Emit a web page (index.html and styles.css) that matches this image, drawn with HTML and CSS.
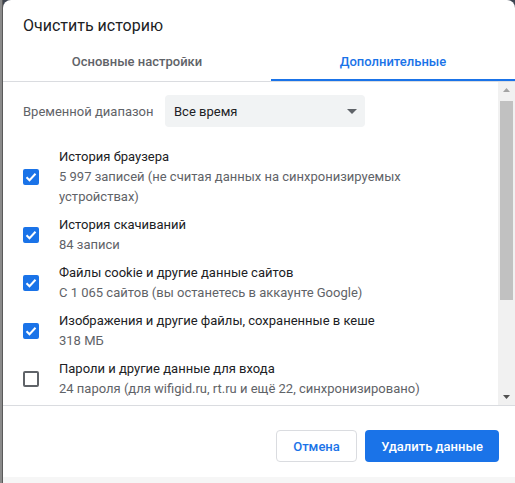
FILE: index.html
```html
<!DOCTYPE html>
<html lang="ru">
<head>
<meta charset="utf-8">
<link rel="stylesheet" href="styles.css">
</head>
<body>
<div class="page">
  <div class="backdrop-strip"></div>
  <div class="main">
    <div class="dialog">
      <div class="title">Очистить историю</div>
      <div class="tabs">
        <div class="tab tab-basic">Основные настройки</div>
        <div class="tab tab-adv active">Дополнительные</div>
      </div>
      <div class="body">
        <div class="scroll">
          <div class="range-row">
            <span class="range-label">Временной диапазон</span>
            <div class="select">
              <span>Все время</span>
              <svg class="select-arrow" width="10" height="5" viewBox="0 0 10 5"><path d="M0 0h10L5 5z" fill="#5f6368"/></svg>
            </div>
          </div>
          <div class="item">
            <span class="cb checked"><svg width="12" height="10" viewBox="0 0 12 10"><path d="M1.5 5.2l3 3 6-6.4" fill="none" stroke="#fff" stroke-width="2"/></svg></span>
            <div class="item-text">
              <div class="item-title">История браузера</div>
              <div class="item-sub">5 997 записей (не считая данных на синхронизируемых устройствах)</div>
            </div>
          </div>
          <div class="item">
            <span class="cb checked"><svg width="12" height="10" viewBox="0 0 12 10"><path d="M1.5 5.2l3 3 6-6.4" fill="none" stroke="#fff" stroke-width="2"/></svg></span>
            <div class="item-text">
              <div class="item-title">История скачиваний</div>
              <div class="item-sub">84 записи</div>
            </div>
          </div>
          <div class="item">
            <span class="cb checked"><svg width="12" height="10" viewBox="0 0 12 10"><path d="M1.5 5.2l3 3 6-6.4" fill="none" stroke="#fff" stroke-width="2"/></svg></span>
            <div class="item-text">
              <div class="item-title">Файлы cookie и другие данные сайтов</div>
              <div class="item-sub">С 1 065 сайтов (вы останетесь в аккаунте Google)</div>
            </div>
          </div>
          <div class="item">
            <span class="cb checked"><svg width="12" height="10" viewBox="0 0 12 10"><path d="M1.5 5.2l3 3 6-6.4" fill="none" stroke="#fff" stroke-width="2"/></svg></span>
            <div class="item-text">
              <div class="item-title">Изображения и другие файлы, сохраненные в кеше</div>
              <div class="item-sub">318 МБ</div>
            </div>
          </div>
          <div class="item">
            <span class="cb"></span>
            <div class="item-text">
              <div class="item-title">Пароли и другие данные для входа</div>
              <div class="item-sub">24 пароля (для wifigid.ru, rt.ru и ещё 22, синхронизировано)</div>
            </div>
          </div>
        </div>
        <div class="scrollbar">
          <svg class="sb-arrow" width="7" height="4" viewBox="0 0 7 4"><path d="M0 4h7L3.5 0z" fill="#a3a3a3"/></svg>
          <div class="sb-track"><div class="sb-thumb"></div></div>
          <svg class="sb-arrow" width="7" height="4" viewBox="0 0 7 4"><path d="M0 0h7L3.5 4z" fill="#505050"/></svg>
        </div>
      </div>
      <div class="footer">
        <button class="btn btn-cancel">Отмена</button>
        <button class="btn btn-primary">Удалить данные</button>
      </div>
    </div>
    <div class="bottom-strip"></div>
  </div>
</div>
</body>
</html>
```
FILE: styles.css
```css
* { box-sizing: border-box; }
html, body { margin: 0; padding: 0; }
body {
  width: 515px;
  height: 483px;
  overflow: hidden;
  background: #3d4450;
  font-family: Roboto, "Noto Sans", sans-serif;
  color: #202124;
}
.page {
  display: flex;
  height: 483px;
}
.backdrop-strip {
  width: 3px;
  background: #8a8a8a;
  border-right: 1px solid #5a5a5a;
}
.main {
  flex: 1;
  display: flex;
  flex-direction: column;
  min-width: 0;
}
.dialog {
  height: 477px;
  background: #fff;
  border-radius: 8px 8px 0 0;
  display: flex;
  flex-direction: column;
}
.bottom-strip {
  flex: 1;
  background: #f6f6f6;
}
.title {
  padding: 16px 0 0 20px;
  font-size: 16px;
  line-height: 20px;
  height: 36px;
  color: #202124;
}
.tabs {
  margin-top: 8px;
  display: flex;
  border-bottom: 1px solid #dadce0;
}
.tab {
  height: 37px;
  font-size: 13px;
  font-weight: 500;
  line-height: 35px;
  text-align: center;
  color: #5f6368;
  border-bottom: 2px solid transparent;
}
.tab-basic { width: 268px; }
.tab-adv { flex: 1; }
.tab.active {
  color: #1a73e8;
  border-bottom-color: #1a73e8;
}
.body {
  height: 324px;
  display: flex;
  border-bottom: 1px solid #dadce0;
}
.scroll {
  flex: 1;
  overflow: hidden;
  padding: 13px 0 0 20px;
}
.range-row {
  display: flex;
  align-items: center;
  height: 32px;
}
.range-label {
  font-size: 13px;
  color: #5f6368;
  width: 142px;
}
.select {
  width: 200px;
  height: 32px;
  background: #f1f3f4;
  border-radius: 4px;
  display: flex;
  align-items: center;
  justify-content: space-between;
  padding: 0 8px 0 9px;
  font-size: 13px;
  color: #202124;
}
.select-arrow { display: block; }
.item {
  display: flex;
  align-items: center;
  margin-top: 8px;
}
.range-row + .item { margin-top: 20px; }
.cb {
  width: 16px;
  height: 16px;
  border-radius: 2px;
  border: 2px solid #5f6368;
  flex: none;
  display: flex;
  align-items: center;
  justify-content: center;
  margin-right: 20px;
}
.cb.checked {
  background: #1a73e8;
  border-color: #1a73e8;
}
.cb svg { display: block; }
.item-text {
  font-size: 13px;
  line-height: 20px;
  padding-right: 60px;
}
.item-title { color: #202124; }
.item-sub { color: #5f6368; }
.scrollbar {
  width: 17px;
  background: #f1f1f1;
  display: flex;
  flex-direction: column;
  align-items: center;
}
.sb-arrow {
  display: block;
  margin: 6px 0;
  flex: none;
}
.sb-track {
  flex: 1;
  width: 100%;
  padding: 3px 2px 0;
}
.sb-thumb {
  height: 199px;
  background: #c1c1c1;
}
.footer {
  flex: 1;
  display: flex;
  justify-content: flex-end;
  align-items: flex-start;
  padding: 24px 16px 0 0;
  gap: 8px;
}
.btn {
  height: 32px;
  border-radius: 4px;
  font-family: Roboto, "Noto Sans", sans-serif;
  font-size: 13px;
  font-weight: 500;
  padding: 0 16px;
  cursor: pointer;
}
.btn-cancel {
  width: 81px;
  background: #fff;
  color: #1a73e8;
  border: 1px solid #dadce0;
}
.btn-primary {
  width: 134px;
  background: #1a73e8;
  color: #fff;
  border: none;
}
```
